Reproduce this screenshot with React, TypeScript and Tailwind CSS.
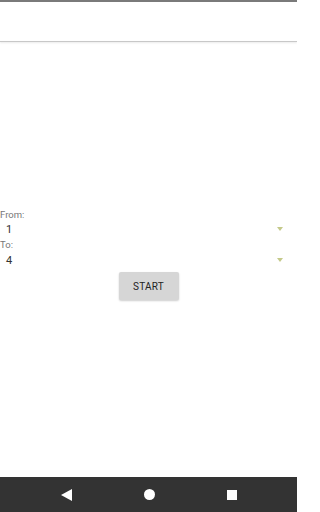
import React from 'react';

function Spinner({ value }: { value: string }) {
  return (
    <div className="flex items-center h-[16px] pl-[6px] pr-[14px]">
      <span className="flex-1 text-[11px] leading-none text-[#333]">{value}</span>
      <svg width="6" height="4" viewBox="0 0 6 4">
        <path d="M0 0 L6 0 L3 4 Z" fill="#c4c98a" />
      </svg>
    </div>
  );
}

export default function App() {
  return (
    <div className="w-[297px] h-[512px] flex flex-col bg-white font-['Roboto','Liberation_Sans',sans-serif] overflow-hidden">
      <div className="h-[2px] bg-[#7a7a7a]" />
      <div className="h-[39px] bg-white" />
      <div className="h-[1px] bg-[#c8c8c8] shadow-[0_1px_2px_rgba(0,0,0,0.12)]" />
      <div className="flex-1 flex flex-col pt-[166px]">
        <div className="text-[9.5px] leading-[13px] text-[#777] h-[13px]">From:</div>
        <Spinner value="1" />
        <div className="text-[9.5px] leading-[15px] text-[#777] h-[15px]">To:</div>
        <Spinner value="4" />
        <div className="flex justify-center mt-[4px]">
          <button
            type="button"
            className="w-[60px] h-[28px] bg-[#d6d6d6] rounded-[2px] shadow-[0_1px_2px_rgba(0,0,0,0.2)] text-[10px] text-[#222] tracking-[0.2px]"
          >
            START
          </button>
        </div>
      </div>
      <div className="h-[35px] bg-[#333333] flex items-center justify-center gap-[72px]">
        <svg width="11" height="12" viewBox="0 0 11 12">
          <path d="M11 0 L11 12 L0 6 Z" fill="#fff" />
        </svg>
        <div className="w-[11px] h-[11px] rounded-full bg-white" />
        <div className="w-[10px] h-[10px] bg-white" />
      </div>
    </div>
  );
}
